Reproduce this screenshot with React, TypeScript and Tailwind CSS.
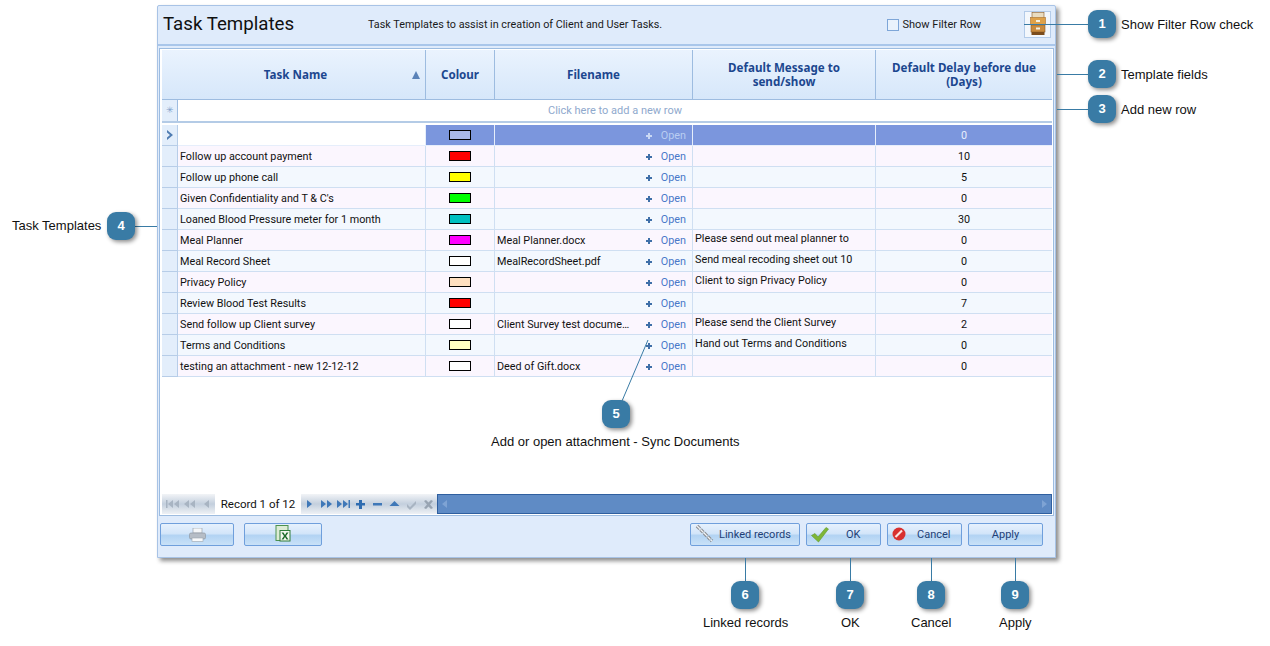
import type { ReactNode } from 'react'

type Row = { name: string; colour: string; file: string; message: string; delay: string }

const rows: Row[] = [
  { name: '', colour: '#a9b9e8', file: '', message: '', delay: '0' },
  { name: 'Follow up account payment', colour: '#ff0000', file: '', message: '', delay: '10' },
  { name: 'Follow up phone call', colour: '#ffff00', file: '', message: '', delay: '5' },
  { name: "Given Confidentiality and T & C's", colour: '#00ff00', file: '', message: '', delay: '0' },
  { name: 'Loaned Blood Pressure meter for 1 month', colour: '#00c0c0', file: '', message: '', delay: '30' },
  { name: 'Meal Planner', colour: '#ff00ff', file: 'Meal Planner.docx', message: 'Please send out meal planner to', delay: '0' },
  { name: 'Meal Record Sheet', colour: '#ffffff', file: 'MealRecordSheet.pdf', message: 'Send meal recoding sheet out 10', delay: '0' },
  { name: 'Privacy Policy', colour: '#ffdfc0', file: '', message: 'Client to sign Privacy Policy', delay: '0' },
  { name: 'Review Blood Test Results', colour: '#ff0000', file: '', message: '', delay: '7' },
  { name: 'Send follow up Client survey', colour: '#ffffff', file: 'Client Survey test docume…', message: 'Please send the Client Survey', delay: '2' },
  { name: 'Terms and Conditions', colour: '#ffffc0', file: '', message: 'Hand out Terms and Conditions', delay: '0' },
  { name: 'testing an attachment - new 12-12-12', colour: '#ffffff', file: 'Deed of Gift.docx', message: '', delay: '0' },
]

const gridCols = 'grid grid-cols-[16px_248px_69px_198px_183px_176px]'
const btn =
  'h-[23px] flex items-center rounded-[2px] border border-[#6f9fdc] bg-[linear-gradient(#e6f1fd_0%,#d3e5f9_45%,#b2d3f3_55%,#c9e1f8_100%)] text-[11px] text-[#1e3f77]'

function Badge({ n, className }: { n: number; className: string }) {
  return (
    <div
      className={`absolute w-[28px] h-[28px] rounded-[9px] bg-[#397ba5] shadow-[2px_2px_4px_rgba(0,0,0,0.45)] flex items-center justify-center text-white text-[13px] font-bold font-['Liberation_Sans',sans-serif] ${className}`}
    >
      {n}
    </div>
  )
}

function Label({ children, className }: { children: ReactNode; className: string }) {
  return (
    <div className={`absolute text-[13px] leading-[16px] text-[#111] whitespace-nowrap font-['Liberation_Sans',sans-serif] ${className}`}>
      {children}
    </div>
  )
}

function Nav({ d, c }: { d: string; c: string }) {
  return (
    <svg width="17" height="12" viewBox="0 0 17 12" className="shrink-0">
      <path d={d} fill={c} />
    </svg>
  )
}

function HeaderCell({ children, last, className }: { children: ReactNode; last?: boolean; className?: string }) {
  return (
    <div
      className={`relative h-[50px] flex items-center justify-center text-center px-3 font-['Noto_Sans',sans-serif] text-[11.6px] leading-[14px] font-bold text-[#1c478f] bg-[linear-gradient(#eaf3fe,#d6e7fa)] border-b border-[#9dbce0] ${last ? '' : 'border-r'} ${className ?? ''}`}
    >
      {children}
    </div>
  )
}

export default function App() {
  return (
    <div className="relative w-[1270px] h-[646px] bg-white overflow-hidden font-['Roboto',sans-serif]">
      <div className="ml-[157px] pt-[5px]">
        {/* Window */}
        <div className="w-[899px] h-[553px] flex flex-col border border-[#a8c3e6] rounded-t-[2px] bg-[#dfebfb] shadow-[3px_3px_4px_rgba(0,0,0,0.45)]">
          {/* Title */}
          <div className="h-[40px] flex items-center border-b-2 border-[#a9c6ea] shrink-0">
            <div className="ml-[5px] w-[205px] text-[18.7px] leading-[24px] text-[#101010] -mt-[3px]">Task Templates</div>
            <div className="text-[10.8px] text-[#1a1a1a]">Task Templates to assist in creation of Client and User Tasks.</div>
            <div className="ml-auto flex items-center">
              <div className="w-[12px] h-[12px] border border-[#7ea6d8] bg-[#e9f2fc] mr-[4px]" />
              <span className="text-[11px] text-[#1a1a1a]">Show Filter Row</span>
              <div className="ml-[43px] mr-[4px] w-[27px] h-[27px] -mt-[2px] border border-[#b3cbe9] bg-[#f3f7fc] flex items-center justify-center">
                <svg width="16" height="24" viewBox="0 0 16 24">
                  <rect x="2" y="0.500" width="12" height="6" fill="#e9dcc0" stroke="#8a5a26" strokeWidth="0.6" />
                  <rect x="0.500" y="5.500" width="15" height="7" fill="#dea149" stroke="#a8702c" strokeWidth="0.6" />
                  <rect x="1" y="13" width="14" height="7" fill="#c98a3d" stroke="#8a5a26" strokeWidth="0.6" />
                  <rect x="1.500" y="20" width="13" height="3" fill="#7b4c1c" />
                  <rect x="6" y="8" width="4" height="2" fill="#f6f0df" />
                  <rect x="6" y="15.500" width="4" height="2" fill="#f6f0df" />
                </svg>
              </div>
            </div>
          </div>

          {/* Grid */}
          <div className="mx-[1px] mt-[2px] h-[468px] shrink-0 flex flex-col border border-[#9dbce0] bg-white pl-[2px] pr-[1px] py-[1px]">
            <div className={gridCols}>
              <HeaderCell>{null}</HeaderCell>
              <HeaderCell className="pr-[24px]">
                Task Name
                <span className="absolute right-[5px] top-[21px] w-0 h-0 border-x-[4px] border-x-transparent border-b-[8px] border-b-[#5a82b8]" />
              </HeaderCell>
              <HeaderCell>Colour</HeaderCell>
              <HeaderCell>Filename</HeaderCell>
              <HeaderCell>
                Default Message to
                <br />
                send/show
              </HeaderCell>
              <HeaderCell last>
                Default Delay before due
                <br />
                (Days)
              </HeaderCell>
            </div>

            {/* New row */}
            <div className="flex h-[23px] border-b-2 border-[#b4cbe6] shrink-0">
              <div className="w-[16px] bg-[#e3eefb] border-r border-[#9dbce0] flex items-center justify-center text-[9px] text-[#7d9fca]">✳</div>
              <div className="flex-1 flex items-center justify-center pt-[2px] text-[11px] text-[#8fa9cd]">Click here to add a new row</div>
            </div>

            {/* Rows */}
            <div className="mt-[2px]">
              {rows.map((r, i) => {
                const selected = i === 0
                const rowBg = selected ? 'bg-[#7b96dd]' : i % 2 === 1 ? 'bg-[#fbf6fe]' : 'bg-[#f3f8fe]'
                const line = selected ? 'border-[#e6eefb]' : 'border-[#cfdff2]'
                return (
                  <div key={i} className={`${gridCols} h-[21px] text-[10.8px] text-[#111] ${rowBg}`}>
                    <div className="bg-[#e3eefb] border-r border-b border-[#b7cde8] flex items-center justify-center">
                      {selected && (
                        <svg width="8" height="10" viewBox="0 0 8 10">
                          <path d="M1 0 L7 5 L1 10 L1 7.5 L4 5 L1 2.5 Z" fill="#4f7cb2" />
                        </svg>
                      )}
                    </div>
                    <div className={`px-[2px] pt-[2px] flex items-center border-r border-b whitespace-nowrap overflow-hidden ${line} ${selected ? 'bg-white' : ''}`}>{r.name}</div>
                    <div className={`flex items-center justify-center border-r border-b ${line}`}>
                      <div className="w-[22px] h-[10px] border border-black" style={{ backgroundColor: r.colour }} />
                    </div>
                    <div className={`flex items-center pl-[2px] pr-[6px] pt-[2px] border-r border-b ${line}`}>
                      <span className="whitespace-nowrap">{r.file}</span>
                      <svg width="6" height="6" viewBox="0 0 6 6" className="ml-auto">
                        <path d="M2 0h2v2h2v2H4v2H2V4H0V2h2z" fill={selected ? '#c9d8f4' : '#3f6fa8'} />
                      </svg>
                      <span className={`ml-[9px] ${selected ? 'text-[#b9cdf1]' : 'text-[#4a78c9]'}`}>Open</span>
                    </div>
                    <div className={`px-[2px] pb-[1px] flex items-center border-r border-b whitespace-nowrap overflow-hidden ${line}`}>{r.message}</div>
                    <div className={`flex items-center justify-center pt-[2px] border-b ${line} ${selected ? 'text-[#e8eefb]' : ''}`}>{r.delay}</div>
                  </div>
                )
              })}
            </div>

            {/* Navigator */}
            <div className="mt-auto h-[20px] flex items-stretch bg-[linear-gradient(#f2f4f7,#c3cfdd_50%,#eef1f5)]">
              <div className="w-[53px] flex items-center pl-[2px]">
                <Nav d="M2 2h1.500v8H2zM9 2v8L4 6zM15 2v8L10 6z" c="#a8b4c2" />
                <Nav d="M8 2v8L3 6zM14 2v8L9 6z" c="#a8b4c2" />
                <Nav d="M11 2v8L6 6z" c="#a8b4c2" />
              </div>
              <div className="w-[86px] bg-white flex items-center justify-center pt-[1px] text-[11.5px] text-[#111]">Record 1 of 12</div>
              <div className="flex items-center">
                <Nav d="M6 2v8l5-4z" c="#3f78b8" />
                <Nav d="M3 2v8l5-4zM9 2v8l5-4z" c="#3f78b8" />
                <Nav d="M2 2v8l5-4zM8 2v8l5-4zM13.500 2H15v8h-1.500z" c="#3f78b8" />
                <Nav d="M7 2h3v3h3v2.500h-3V11H7V7.500H4V5h3z" c="#2f6cb0" />
                <Nav d="M4 5h9v2.500H4z" c="#3f78b8" />
                <Nav d="M8.500 3l5 5h-10z" c="#3f78b8" />
                <Nav d="M4 6l3 3 6-6v3l-6 6-3-3z" c="#a8b4c2" />
                <Nav d="M4 3l2-1 2.500 2.500L11 2l2 1-3 3.500 3 3.500-2 1-2.500-2.500L6 11l-2-1 3-3.500z" c="#98a4b2" />
              </div>
              <div className="flex-1 border border-[#2f5f9f] bg-[#5f8bc5] flex items-center justify-between px-[4px]">
                <span className="w-0 h-0 border-y-[4px] border-y-transparent border-r-[5px] border-r-[#7ea3d4]" />
                <span className="w-0 h-0 border-y-[4px] border-y-transparent border-l-[5px] border-l-[#7ea3d4]" />
              </div>
            </div>
          </div>

          {/* Footer */}
          <div className="flex-1 flex items-start pt-[7px] px-[2px] gap-[10px]">
            <button className={`${btn} w-[74px] justify-center`}>
              <svg width="17" height="14" viewBox="0 0 17 14">
                <rect x="4" y="0" width="9" height="5" fill="#f4f6f8" stroke="#9aa3ad" strokeWidth="0.7" />
                <rect x="0.500" y="5" width="16" height="6" rx="1.500" fill="#b6bdc6" stroke="#8a929c" strokeWidth="0.6" />
                <rect x="3" y="10" width="11" height="3.500" fill="#f9fafb" stroke="#9aa3ad" strokeWidth="0.6" />
              </svg>
            </button>
            <button className={`${btn} w-[78px] justify-center`}>
              <svg width="16" height="17" viewBox="0 0 16 17" className="-mt-[3px]">
                <rect x="1" y="0.500" width="12" height="15" fill="#dcecd5" stroke="#4c9150" />
                <rect x="5" y="5.500" width="10" height="10.500" fill="#f5f8f0" stroke="#2f7d39" />
                <path d="M6.500 7.500h2L10 10l1.500-2.500h2L11 11l2.500 3.500h-2L10 12l-1.500 2.500h-2L9 11z" fill="#1d6b2a" />
              </svg>
            </button>
            <button className={`${btn} w-[110px] ml-auto`}>
              <svg width="20" height="20" viewBox="0 0 20 20" className="ml-[4px] -mt-[1px]">
                <path d="M2 2l15 15" stroke="#8c8f94" strokeWidth="3.500" strokeDasharray="4 1" fill="none" />
                <path d="M2 2l15 15" stroke="#f2f3f4" strokeWidth="1.300" strokeDasharray="4 1" fill="none" />
              </svg>
              <span className="ml-[4px] pt-[2px]">Linked records</span>
            </button>
            <button className={`${btn} w-[75px] -ml-[4px]`}>
              <svg width="18" height="16" viewBox="0 0 18 16" className="ml-[4px]">
                <path d="M0.500 8.500L4 6.500 7 10 15 0.500 17.500 2 7.500 15z" fill="#7fb637" stroke="#5f9a2a" strokeWidth="0.600" />
              </svg>
              <span className="ml-[17px] pt-[2px]">OK</span>
            </button>
            <button className={`${btn} w-[75px] -ml-[4px]`}>
              <svg width="14" height="14" viewBox="0 0 14 14" className="ml-[4px] -mt-[2px]">
                <circle cx="7" cy="7" r="6.500" fill="#d8302f" />
                <path d="M3.500 10L10 3.500" stroke="#fbe3e0" strokeWidth="2.200" />
              </svg>
              <span className="ml-[11px] pt-[2px]">Cancel</span>
            </button>
            <button className={`${btn} w-[75px] -ml-[4px] mr-[10px] justify-center pt-[2px]`}>Apply</button>
          </div>
        </div>
      </div>

      {/* Callouts */}
      <div className="absolute left-[1024px] top-[24px] w-[64px] h-[1px] bg-[#397ba5]" />
      <div className="absolute left-[1057px] top-[74px] w-[31px] h-[1px] bg-[#397ba5]" />
      <div className="absolute left-[1057px] top-[109px] w-[31px] h-[1px] bg-[#397ba5]" />
      <div className="absolute left-[135px] top-[226px] w-[22px] h-[1px] bg-[#397ba5]" />
      <div className="absolute left-[745px] top-[558px] w-[1px] h-[24px] bg-[#397ba5]" />
      <div className="absolute left-[850px] top-[558px] w-[1px] h-[24px] bg-[#397ba5]" />
      <div className="absolute left-[931px] top-[558px] w-[1px] h-[24px] bg-[#397ba5]" />
      <div className="absolute left-[1015px] top-[558px] w-[1px] h-[24px] bg-[#397ba5]" />
      <svg className="absolute left-[615px] top-[335px]" width="40" height="70" viewBox="0 0 40 70">
        <path d="M7 66L33 5" stroke="#397ba5" strokeWidth="1" fill="none" />
      </svg>

      <Badge n={1} className="left-[1088px] top-[10px]" />
      <Badge n={2} className="left-[1088px] top-[60px]" />
      <Badge n={3} className="left-[1088px] top-[95px]" />
      <Badge n={4} className="left-[107px] top-[212px]" />
      <Badge n={5} className="left-[602px] top-[400px]" />
      <Badge n={6} className="left-[731px] top-[581px]" />
      <Badge n={7} className="left-[836px] top-[581px]" />
      <Badge n={8} className="left-[917px] top-[581px]" />
      <Badge n={9} className="left-[1001px] top-[581px]" />

      <Label className="left-[1121px] top-[17px]">Show Filter Row check</Label>
      <Label className="left-[1121px] top-[67px]">Template fields</Label>
      <Label className="left-[1121px] top-[102px]">Add new row</Label>
      <Label className="left-[12px] top-[218px]">Task Templates</Label>
      <Label className="left-[491px] top-[434px]">Add or open attachment - Sync Documents</Label>
      <Label className="left-[703px] top-[615px]">Linked records</Label>
      <Label className="left-[841px] top-[615px]">OK</Label>
      <Label className="left-[911px] top-[615px]">Cancel</Label>
      <Label className="left-[999px] top-[615px]">Apply</Label>
    </div>
  )
}
